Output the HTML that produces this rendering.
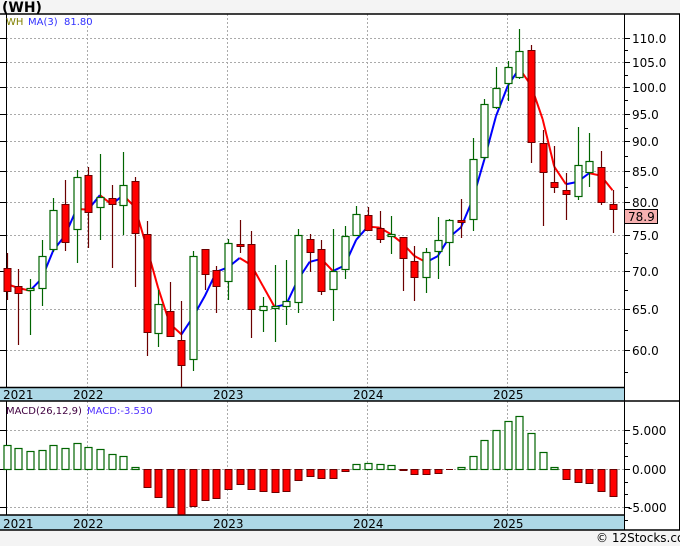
<!DOCTYPE html>
<html><head><meta charset="utf-8">
<style>
html,body{margin:0;padding:0;background:#f4f4f4;width:680px;height:546px;overflow:hidden}
svg{display:block}
text{font-family:"DejaVu Sans","Liberation Sans",sans-serif}
</style></head><body>
<svg id="s" width="680" height="546" xmlns="http://www.w3.org/2000/svg"></svg>
<script>
var S=document.getElementById('s');var h='';
function L(x1,y1,x2,y2,c,w,d){h+='<line x1="'+x1+'" y1="'+y1+'" x2="'+x2+'" y2="'+y2+'" stroke="'+c+'" stroke-width="'+(w||1)+'"'+(d?' stroke-dasharray="'+d+'"':'')+'/>';}
function R(x,y,w,hh,f,s,sw){h+='<rect x="'+x+'" y="'+y+'" width="'+w+'" height="'+hh+'" fill="'+f+'"'+(s?' stroke="'+s+'" stroke-width="'+(sw||1)+'"':'')+'/>';}
function T(x,y,t,c,sz,extra){h+='<text x="'+x+'" y="'+y+'" fill="'+c+'" font-size="'+sz+'" '+(extra||'')+'>'+t+'</text>';}
R(0,14,680,516,'#fff');
T(2,12,'(WH)','#000',14,'font-weight="bold"');
var lv=[[110,38],[105,62],[100,87],[95,114],[90,141],[85,171],[80,202],[75,235],[70,271],[65,309],[60,350]];
lv.forEach(function(a){L(6,a[1]+.5,624,a[1]+.5,'#aaa',1,'2,2');L(0,a[1]+.5,6,a[1]+.5,'#000');L(624,a[1]+.5,630,a[1]+.5,'#000');T(632,a[1]+5,a[0].toFixed(1),'#000',12);});
[50,75,100,128,156,187,219,253,290,330,372].forEach(function(y){L(624,y+.5,628,y+.5,'#000');});
var gx=[87,227,367,507];
gx.forEach(function(x){L(x+.5,14,x+.5,387,'#aaa',1,'2,2');L(x+.5,401,x+.5,515,'#aaa',1,'2,2');});
[[430,'5.000'],[469,'0.000'],[507,'-5.000']].forEach(function(a){L(6,a[0]+.5,624,a[0]+.5,'#aaa',1,'2,2');L(0,a[0]+.5,6,a[0]+.5,'#000');L(624,a[0]+.5,630,a[0]+.5,'#000');T(a[1][0]=='-'?628:632,a[0]+5,a[1],'#000',12);});
[443,456,482,494,520].forEach(function(y){L(624,y+.5,628,y+.5,'#000');});
R(0,387,624,14,'#add8e6');R(0,515,624,15,'#add8e6');
L(0,387.5,624,387.5,'#000',1.5);L(0,401,680,401,'#000',1.5);L(0,515,624,515,'#000',1.5);L(0,530,680,530,'#000',1.5);
L(0,14,680,14,'#000',1.5);L(624.5,14,624.5,530,'#000');L(6.5,14,6.5,387,'#000');L(6.5,401,6.5,515,'#000');L(679.5,14,679.5,530,'#000');
var yl=[[3,'2021'],[73,'2022'],[213,'2023'],[353,'2024'],[493,'2025']];
yl.forEach(function(a){T(a[0],399,a[1],'#000',12);T(a[0],528,a[1],'#000',12);});
var C=[['r',268,291,253,300],['r',286,293,269,345],['g',288,290,279,335],['g',256,288,240,306],['g',210,249,198,252],
['r',204,242,180,251],['g',177,229,170,263],['r',175,212,167,248],['g',197,207,154,240],['r',198,204,185,268],['g',185,205,152,235],['r',181,233,177,287],
['r',234,332,221,356],['g',304,333,290,347],['r',311,336,282,336],['r',340,365,301,387],['g',256,359,251,371],['r',249,274,249,290],['r',270,286,266,313],
['g',243,281,239,300],['r',244,246,220,253],['r',244,309,231,338],['g',306,310,297,332],['g',306,308,265,342],['g',301,306,260,325],['g',235,302,229,313],
['r',239,252,234,272],['r',249,291,240,295],['g',271,289,229,321],['g',236,269,226,279],['g',214,235,206,235],['r',215,230,207,230],['r',228,239,211,243],
['g',234,236,216,254],['r',237,258,237,291],['r',261,277,246,301],['g',252,277,248,293],['g',240,251,217,279],['g',220,242,219,266],['r',220,222,199,238],
['g',159,219,138,231],['g',104,157,99,160],['g',88,107,67,109],['g',67,83,61,101],['g',51,77,29,79],['r',50,142,45,163],['r',143,172,130,226],
['r',182,187,146,193],['r',190,194,173,220],['g',165,196,127,200],['g',161,172,133,187],['r',167,202,151,205],['r',204,209,190,233]];
function cx(i){return 6.7+11.65*i;}
function pr(y){return Math.exp(4.7005-(y-38)/514.7);}
function py(p){return 38+(4.7005-Math.log(p))*514.7;}
var cl=C.map(function(c){return pr(c[0]=='g'?c[1]:c[2]);});
var ma=[[0,pr(284)],[1,pr(288)]];for(var i=2;i<C.length;i++)ma.push([i,(cl[i]+cl[i-1]+cl[i-2])/3]);
for(var k=1;k<ma.length;k++){var a=ma[k-1],b=ma[k];L(cx(a[0]),py(a[1]),cx(b[0]),py(b[1]),b[1]>=a[1]?'#0000ff':'#ff0000',2);}
C.forEach(function(c,i){var x=Math.round(cx(i));var g=c[0]=='g';var col=g?'#006400':'#6b0000';
L(x+.5,c[3],x+.5,c[4],col,1.2);
var hh=Math.max(c[2]-c[1],1);
if(g)R(x-3,c[1]+.5,7,hh,'#fff',col,1.2);else R(x-3,c[1]+.5,7,hh,'#ff0000',col,1);});
var M=[445,448,451,450,445,448,443,447,449,454,456,467,487,497,507,515,506,500,498,489,484,489,491,492,491,480,476,478,478,471,464,463,464,465,470,474,474,473,469,467,456,440,430,421,416,433,452,467,479,482,483,491,496];
M.forEach(function(y,i){var x=Math.round(cx(i));var z=469;if(y<z)R(x-3,y+.5,7,z-y,'#fff','#006400',1.2);else if(y>z)R(x-3,z+.5,7,Math.min(y,514)-z,'#ff0000','#6b0000',1);else L(x-3,z+.5,x+4,z+.5,'#6b0000');});
R(624.5,209.5,33,14,'#f7b0b0','#000',1);T(628,221,'78.9','#000',12);
T(6,25,'WH','#808000',10);T(28,25,'MA(3)','#3030ff',10);T(64,25,'81.80','#3030ff',10);
T(6,414,'MACD(26,12,9)','#400040',10);T(87,414,'MACD:-3.530','#5030ff',10);
T(596,542,'© 12Stocks.com','#000',12);
S.innerHTML=h;
</script>
</body></html>
